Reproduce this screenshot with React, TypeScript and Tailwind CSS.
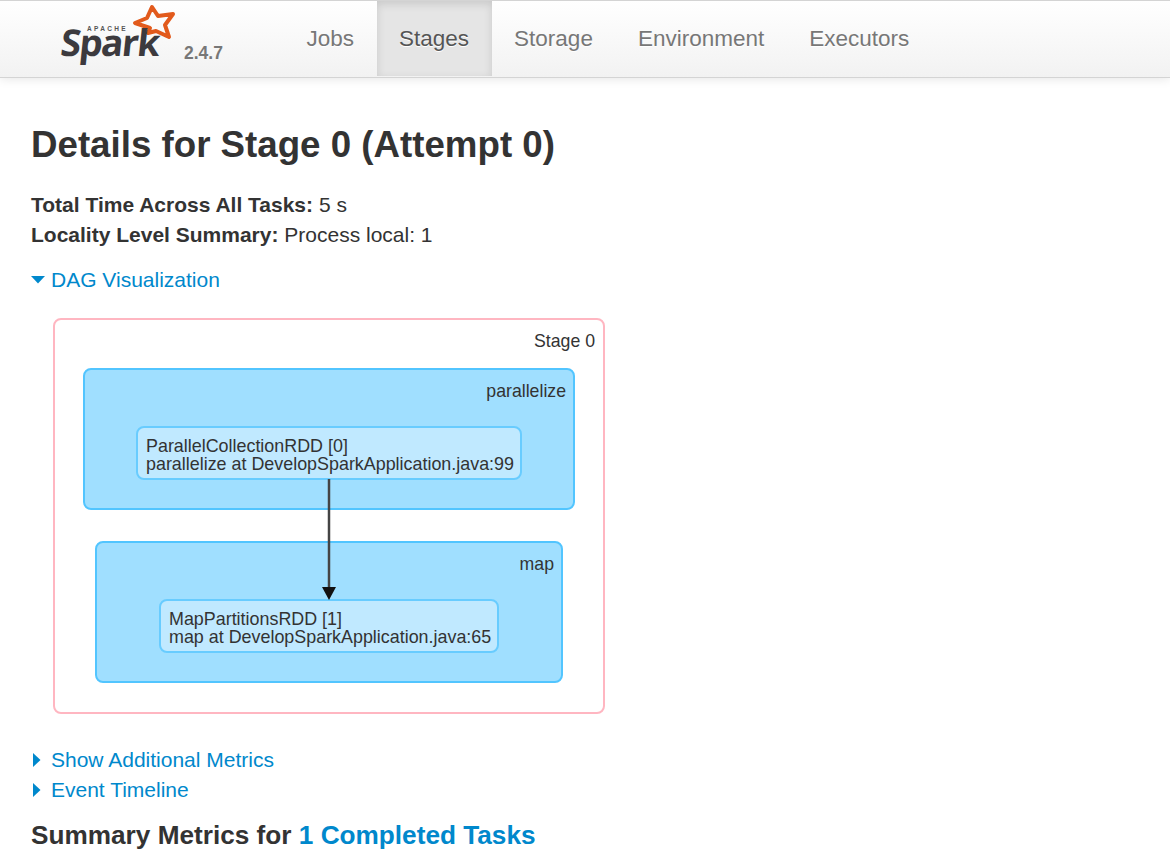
import React from "react";

const navItems = ["Jobs", "Stages", "Storage", "Environment", "Executors"];

function SparkLogo() {
  return (
    <div className="relative w-[120px] h-[64px]">
      <svg viewBox="0 0 120 64" className="absolute inset-0 w-[120px] h-[64px]">
        {/* star */}
        <path
          d="M92 6 L98 15 L113 13 L105 24 L109 36 L96 30 L88 32 L90 27 L75 22 L87 17 Z"
          fill="none"
          stroke="#e25a1c"
          strokeWidth="4"
          strokeLinejoin="round"
        />
      </svg>
      <span className="absolute left-[27px] top-[24px] text-[6.5px] leading-[7px] font-bold tracking-[2.3px] text-[#555]">
        APACHE
      </span>
      <span className="absolute left-[1px] top-[19px] text-[37px] leading-[44px] font-bold tracking-[-1.6px] text-[#3c3a3e] -skew-x-6 font-['Open_Sans',sans-serif]">
        Spark
      </span>
    </div>
  );
}

function StageNode({ title, sub, width }: { title: string; sub: string; width: string }) {
  return (
    <div className={`${width} h-[54px] bg-[#c0e9ff] border-2 border-[#68ccff] rounded-[8px] pl-[8px] pt-[9px] text-[17.9px] leading-[18px] text-[#333] whitespace-nowrap`}>
      <div>{title}</div>
      <div>{sub}</div>
    </div>
  );
}

function Caret({ open }: { open?: boolean }) {
  return open ? (
    <svg width="14" height="8" viewBox="0 0 14 8" className="shrink-0">
      <path d="M0 0 H14 L7 7.5 Z" fill="#0088cc" />
    </svg>
  ) : (
    <svg width="8" height="14" viewBox="0 0 8 14" className="shrink-0 ml-[2px]">
      <path d="M0 0 L7.5 7 L0 14 Z" fill="#0088cc" />
    </svg>
  );
}

export default function App() {
  return (
    <div className="w-[1170px] h-[862px] overflow-hidden bg-white font-['Liberation_Sans',sans-serif] text-[#333]">
      {/* Navbar */}
      <nav className="h-[78px] flex items-stretch border-t border-b border-[#d4d4d4] bg-gradient-to-b from-white to-[#f2f2f2] shadow-[0_1px_10px_rgba(0,0,0,0.1)]">
        <div className="w-[60px] shrink-0" />
        <SparkLogo />
        <span className="self-start mt-[42px] ml-[4px] w-[100px] text-[17.5px] leading-[20px] font-bold text-[#777]">2.4.7</span>
        <div className="flex items-stretch">
          {navItems.map((item) => (
            <div
              key={item}
              className={
                item === "Stages"
                  ? "h-[75px] px-[22.5px] flex items-center text-[22.5px] text-[#555] bg-[#e5e5e5] shadow-[inset_0_3px_8px_rgba(0,0,0,0.125)] [text-shadow:0_1px_0_#fff]"
                  : "h-[75px] px-[22.5px] flex items-center text-[22.5px] text-[#777] [text-shadow:0_1px_0_#fff]"
              }
            >
              {item}
            </div>
          ))}
        </div>
      </nav>

      <main className="pl-[31px]">
        <h3 className="mt-[44px] text-[36.7px] leading-[46px] font-bold text-[#333]">Details for Stage 0 (Attempt 0)</h3>

        <ul className="mt-[22px] text-[21px] leading-[30px]">
          <li><strong>Total Time Across All Tasks:</strong> 5 s</li>
          <li><strong>Locality Level Summary:</strong> Process local: 1</li>
        </ul>

        <div className="mt-[15px] flex items-center gap-[6px] text-[21px] leading-[30px] text-[#0088cc]">
          <Caret open />
          <span>DAG Visualization</span>
        </div>

        {/* DAG */}
        <div className="relative mt-[23px] ml-[22px] w-[552px] h-[396px] border-2 border-[#ffb6c1] rounded-[8px] flex flex-col items-center">
          <div className="self-end mr-[8px] mt-[10px] h-[22px] text-[17.7px] leading-[22px] text-[#333]">Stage 0</div>
          <div className="mt-[16px] w-[492px] h-[142px] bg-[#a0dfff] border-2 border-[#52c5ff] rounded-[8px] flex flex-col items-center">
            <div className="self-end mr-[7px] mt-[10px] h-[22px] text-[17.7px] leading-[22px] text-[#333]">parallelize</div>
            <div className="mt-[24px]">
              <StageNode title="ParallelCollectionRDD [0]" sub="parallelize at DevelopSparkApplication.java:99" width="w-[386px]" />
            </div>
          </div>
          <div className="mt-[31px] w-[468px] h-[142px] bg-[#a0dfff] border-2 border-[#52c5ff] rounded-[8px] flex flex-col items-center">
            <div className="self-end mr-[7px] mt-[10px] h-[22px] text-[17.7px] leading-[22px] text-[#333]">map</div>
            <div className="mt-[24px]">
              <StageNode title="MapPartitionsRDD [1]" sub="map at DevelopSparkApplication.java:65" width="w-[340px]" />
            </div>
          </div>
          <svg width="16" height="122" viewBox="0 0 16 122" className="absolute left-[266px] top-[159px]">
            <path d="M8 0 V110" stroke="#444" strokeWidth="2.5" />
            <path d="M1 108 H15 L8 121 Z" fill="#111" />
          </svg>
        </div>

        <div className="mt-[31px] flex items-center gap-[10px] text-[21px] leading-[30px] text-[#0088cc]">
          <Caret />
          <span>Show Additional Metrics</span>
        </div>
        <div className="flex items-center gap-[10px] text-[21px] leading-[30px] text-[#0088cc]">
          <Caret />
          <span>Event Timeline</span>
        </div>

        <h4 className="mt-[15px] text-[26.2px] leading-[30px] font-bold text-[#333]">
          Summary Metrics for <span className="text-[#0088cc]">1 Completed Tasks</span>
        </h4>
      </main>
    </div>
  );
}
